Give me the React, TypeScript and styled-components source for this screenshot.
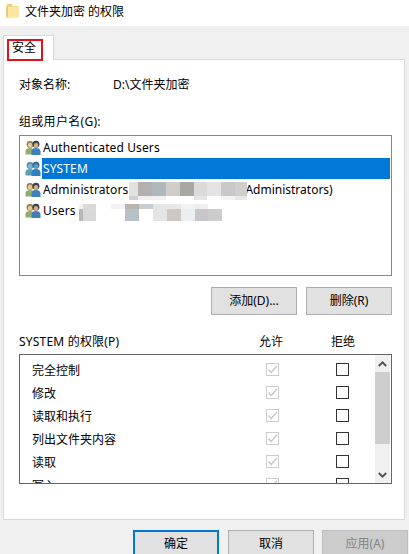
import React from "react";
import styled, { createGlobalStyle } from "styled-components";

const Global = createGlobalStyle`
  html, body { margin: 0; padding: 0; height: 100%; overflow: hidden; background: #f0f0f0; }
  body { font-family: "Noto Sans", "Noto Sans CJK SC", sans-serif; font-size: 12px; color: #000; }
`;
const Dialog = styled.div`width: 409px; height: 554px; overflow: hidden; display: flex; flex-direction: column;`;
const TitleBar = styled.div`height: 26px; flex: none; background: #fff; display: flex; align-items: center; gap: 6px; padding-left: 6px; font-size: 12px; line-height: 16px; svg { margin-top: -5px; } span { margin-top: -2px; }`;
const Body = styled.div`flex: none; padding: 9px 1px 0 3px; display: flex; flex-direction: column;`;
const TabStrip = styled.div`height: 24px; display: flex; position: relative; z-index: 1;`;
const Tab = styled.div`width: 51px; height: 25px; box-sizing: border-box; background: #fff; border: 1px solid #d9d9d9; border-bottom: 0; padding: 3px 0 0 3px;`;
const TabLabel = styled.div`width: 36px; height: 22px; box-sizing: border-box; border: 2px solid #e5101e; display: flex; align-items: center; justify-content: center; padding: 0 2px 4px 0; line-height: 16px;`;
const Panel = styled.div`height: 461px; margin-right: 3px; box-sizing: border-box; background: #fff; border: 1px solid #d9d9d9; padding: 17px 12px 0 15px; display: flex; flex-direction: column;`;
const InfoRow = styled.div`height: 16px; line-height: 16px; display: grid; grid-template-columns: 94px 1fr;`;
const Caption = styled.div`height: 16px; line-height: 18px; margin-top: 20px; letter-spacing: 0.3px;`;
const UserList = styled.div`height: 141px; box-sizing: border-box; margin-top: 6px; border: 1px solid #828790; padding: 1px 1px 0 5px; overflow: hidden;`;
const UserRow = styled.div`height: 21px; display: flex; align-items: center; white-space: nowrap;`;
const UserIcon = styled.span`width: 16px; height: 16px; flex: none; margin-right: 1px; display: block;`;
const UserName = styled.div<{ $selected?: boolean }>`flex: 1; height: 21px; line-height: 22px; padding-left: 1px; letter-spacing: 0.12px; display: flex; background: ${p => (p.$selected ? "#0078d7" : "transparent")}; color: ${p => (p.$selected ? "#fff" : "#000")};`;
const Mosaic = styled.div<{ $ml: number; $top: number }>`position: relative; z-index: 1; margin: ${p => p.$top}px 0 0 ${p => p.$ml}px; display: flex; flex-direction: column; align-self: flex-start; flex: none;`;
const MosaicBand = styled.div<{ $h: number }>`height: ${p => p.$h}px; display: flex;`;
const MosaicCell = styled.div<{ $w: number; $c: string }>`width: ${p => p.$w}px; background: ${p => p.$c};`;
const TrailText = styled.span`margin-left: -2px; letter-spacing: 0;`;
const ButtonRow = styled.div`margin-top: 11px; display: flex; justify-content: flex-end; gap: 9px;`;
const Button = styled.button<{ $primary?: boolean; $disabled?: boolean }>`
  width: 86px; height: 28px; flex: none; box-sizing: border-box; padding: 0; font: inherit; line-height: 16px;
  background: ${p => (p.$disabled ? "#cccccc" : "#e1e1e1")};
  color: ${p => (p.$disabled ? "#838383" : "#000")};
  border: ${p => (p.$primary ? "2px solid #0078d7" : p.$disabled ? "1px solid #bfbfbf" : "1px solid #adadad")};
`;
const PermHeader = styled.div`margin-top: 18px; height: 16px; line-height: 18px; display: grid; grid-template-columns: 216px 72px 72px;`;
const PermTitle = styled.div`letter-spacing: 0.2px; white-space: nowrap;`;
const ColHead = styled.div`text-align: center;`;
const PermBox = styled.div`position: relative; margin-top: 5px; height: 130px; box-sizing: border-box; border: 1px solid #646464; padding: 3px 0 0 12px; overflow: hidden;`;
const PermRow = styled.div`height: 23px; flex: none; display: grid; grid-template-columns: 234px 13px 57px 13px; align-items: center; line-height: 16px;`;
const PermName = styled.div`margin-top: 3px;`;
const Check = styled.div<{ $off?: boolean }>`width: 13px; height: 13px; box-sizing: border-box; background: #fff; border: 1px solid ${p => (p.$off ? "#cccccc" : "#333333")}; display: flex; svg { display: block; }`;
const Scrollbar = styled.div`position: absolute; top: 0; right: 1px; bottom: 0; width: 15px; background: #f0f0f0; display: flex; flex-direction: column;`;
const ScrollArrow = styled.div`height: 17px; flex: none; display: flex; align-items: center; justify-content: center;`;
const ScrollThumb = styled.div`height: 72px; flex: none; background: #cdcdcd;`;
const ScrollSpacer = styled.div`flex: 1;`;
const Footer = styled.div`margin-top: 10px; display: flex; justify-content: flex-end; gap: 9px; & > :last-child { margin-left: -1px; }`;

const FolderIcon = () => (
  <svg width="13" height="15" viewBox="0 0 13 15">
    <path d="M0.5 1.5 L6 0.5 V3 H12.5 V14 L0.5 14.5 Z" fill="#f3cf6b" />
    <path d="M2 3.5 H12.5 V14.5 H1 Z" fill="#fbe6a2" />
    <path d="M1 4 V14.5" stroke="#e2b64f" />
  </svg>
);

const Users = ({ selected }: { selected?: boolean }) => {
  const c = selected
    ? { h1: "#4c8ea8", f1: "#7fb4cf", b1: "#5aa0b4", h2: "#2f6d96", f2: "#5f9cc4", b2: "#2f7fbd" }
    : { h1: "#8c7a45", f1: "#e6c89a", b1: "#93ad6e", h2: "#3d4248", f2: "#d6ad84", b2: "#3f7fb8" };
  return (
    <UserIcon>
      <svg width="16" height="16" viewBox="0 0 16 16">
        <circle cx="5" cy="4.5" r="3.4" fill={c.h1} />
        <ellipse cx="5" cy="5.2" rx="2.2" ry="2.6" fill={c.f1} />
        <path d="M0.5 14.5 V11 C0.5 9 2.5 8 5 8 C7.5 8 8.5 9 8.5 11 V14.5 Z" fill={c.b1} />
        <circle cx="11" cy="4.2" r="3.4" fill={c.h2} />
        <ellipse cx="11" cy="5.4" rx="2.2" ry="2.3" fill={c.f2} />
        <path d="M6.5 15 V11.5 C6.5 9 8.5 8 11 8 C13.5 8 15.5 9 15.5 11.5 V15 Z" fill={c.b2} />
      </svg>
    </UserIcon>
  );
};

const CheckBox = ({ on }: { on?: boolean }) => (
  <Check $off={on}>
    {on && (
      <svg width="11" height="11" viewBox="0 0 11 11">
        <path d="M1.5 5.5 L4.2 8.5 L9.8 2" fill="none" stroke="#c4c4c4" strokeWidth="1.3" />
      </svg>
    )}
  </Check>
);

type Band = { h: number; cells: [number, string][] };
const adminMosaic: Band[] = [
  { h: 14, cells: [[9, "#e2e2e2"], [14, "#b4b0b0"], [14, "#b0b8bc"], [14, "#d0ccc8"], [14, "#a8a8a2"], [13, "#dcdad8"], [14, "#e4e4e4"], [14, "#c8c8c8"], [12, "#d2cecc"]] },
  { h: 4, cells: [[9, "#d0d0d0"], [14, "#f0f0f0"], [14, "#f2f0f0"], [14, "#ffffff"], [14, "#ffffff"], [13, "#e4e4e4"], [14, "#ffffff"], [14, "#f4f4f4"], [12, "#e8e8e8"]] },
];
const usersMosaic: Band[] = [
  { h: 5, cells: [[4, "#f2f2f2"], [13, "#dcdad8"], [15, "#ffffff"], [14, "#f2f2f2"], [14, "#b8b4ac"], [14, "#c8ccd0"], [14, "#e4e6e8"], [14, "#e8e8e8"], [14, "#f2f2f2"], [13, "#eeeeee"]] },
  { h: 12, cells: [[4, "#b8b8b8"], [13, "#d8d8d8"], [15, "#ffffff"], [14, "#ffffff"], [14, "#b8c0c8"], [14, "#ffffff"], [14, "#e4e4e4"], [14, "#ccc8c4"], [14, "#eceef0"], [13, "#c8c6ca"], [14, "#cccccc"]] },
];

const MosaicBlock = ({ bands, ml, top }: { bands: Band[]; ml: number; top: number }) => (
  <Mosaic $ml={ml} $top={top}>
    {bands.map((b, i) => (
      <MosaicBand key={i} $h={b.h}>
        {b.cells.map(([w, c], j) => <MosaicCell key={j} $w={w} $c={c} />)}
      </MosaicBand>
    ))}
  </Mosaic>
);

const perms = ["完全控制", "修改", "读取和执行", "列出文件夹内容", "读取", "写入"];

export default function App() {
  return (
    <Dialog>
      <Global />
      <TitleBar><FolderIcon /><span>文件夹加密 的权限</span></TitleBar>
      <Body>
        <TabStrip><Tab><TabLabel>安全</TabLabel></Tab></TabStrip>
        <Panel>
          <InfoRow><div>对象名称:</div><div>D:\文件夹加密</div></InfoRow>
          <Caption>组或用户名(G):</Caption>
          <UserList>
            <UserRow><Users /><UserName>Authenticated Users</UserName></UserRow>
            <UserRow><Users selected /><UserName $selected>SYSTEM</UserName></UserRow>
            <UserRow>
              <Users />
              <UserName>
                Administrators
                <MosaicBlock bands={adminMosaic} ml={1} top={3} />
                <TrailText>Administrators)</TrailText>
              </UserName>
            </UserRow>
            <UserRow>
              <Users />
              <UserName>
                Users
                <MosaicBlock bands={usersMosaic} ml={3} top={4} />
              </UserName>
            </UserRow>
          </UserList>
          <ButtonRow><Button>添加(D)...</Button><Button>删除(R)</Button></ButtonRow>
          <PermHeader><PermTitle>SYSTEM 的权限(P)</PermTitle><ColHead>允许</ColHead><ColHead>拒绝</ColHead></PermHeader>
          <PermBox>
            {perms.map(p => (
              <PermRow key={p}>
                <PermName>{p}</PermName>
                <CheckBox on />
                <span />
                <CheckBox />
              </PermRow>
            ))}
            <Scrollbar>
              <ScrollArrow>
                <svg width="9" height="6" viewBox="0 0 9 6"><path d="M0.8 5 L4.5 1.3 L8.2 5" fill="none" stroke="#505050" strokeWidth="1.8" /></svg>
              </ScrollArrow>
              <ScrollThumb />
              <ScrollSpacer />
              <ScrollArrow>
                <svg width="9" height="6" viewBox="0 0 9 6"><path d="M0.8 1 L4.5 4.7 L8.2 1" fill="none" stroke="#505050" strokeWidth="1.8" /></svg>
              </ScrollArrow>
            </Scrollbar>
          </PermBox>
        </Panel>
        <Footer>
          <Button $primary>确定</Button>
          <Button>取消</Button>
          <Button $disabled>应用(A)</Button>
        </Footer>
      </Body>
    </Dialog>
  );
}
